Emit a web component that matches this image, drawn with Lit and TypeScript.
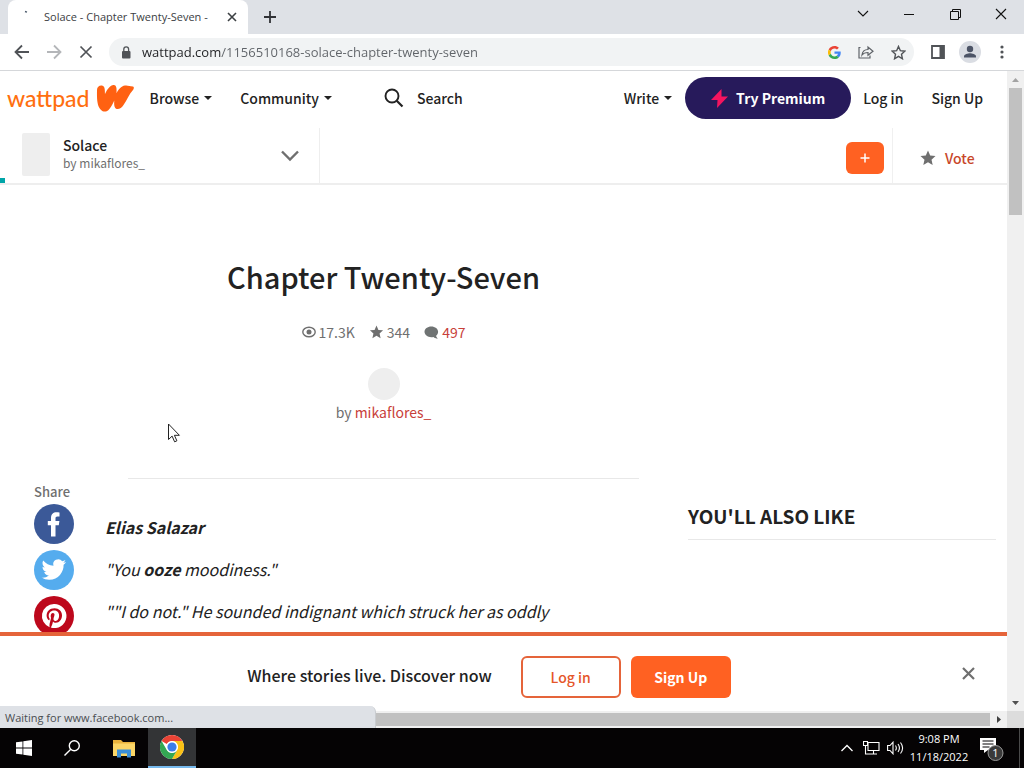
import { LitElement, html, css, svg } from "lit";
import { customElement } from "lit/decorators.js";

const caret = html`<svg class="caret" width="8" height="4" viewBox="0 0 8 4"><path d="M0 0h8L4 4z" fill="currentColor" /></svg>`;

const starPath = svg`<path d="M8 0.6l2.2 5 5.3.5-4 3.6 1.2 5.3L8 12.2 3.3 15l1.2-5.3-4-3.6 5.3-.5z" fill="currentColor" />`;

@customElement("browser-chrome")
class BrowserChrome extends LitElement {
  static styles = css`
    :host { display: block; font-family: "Open Sans", "Noto Sans", sans-serif; color: #3c4043; }
    * { box-sizing: border-box; }
    button { border: 0; background: none; padding: 0; margin: 0; color: inherit; font: inherit; display: flex; align-items: center; justify-content: center; }
    svg { display: block; }
    .strip { height: 34px; background: #dee1e6; display: flex; align-items: stretch; }
    .tab { width: 240px; margin: 0 8px; padding: 0 10px 0 14px; background: #fff; border-radius: 8px 8px 0 0; display: flex; align-items: center; }
    .spin { width: 10px; height: 16px; margin-right: 12px; }
    .title { flex: 1; min-width: 0; overflow: hidden; white-space: nowrap; font-size: 11px; line-height: 16px; }
    .new { width: 28px; }
    .space { flex: 1; }
    .win { width: 46px; height: 28px; color: #111; }
    .bar { height: 37px; display: flex; align-items: center; background: #fff; border-bottom: 1px solid #d5d7da; padding: 0 6px; color: #5f6368; }
    .nav { width: 32px; height: 28px; }
    .omni { flex: 1; margin: 0 8px 0 7px; height: 28px; border-radius: 14px; background: #f1f3f4; display: flex; align-items: center; padding: 0 0 0 12px; }
    .url { flex: 1; min-width: 0; margin-left: 11px; border: 0; outline: 0; padding: 0; font: 13px/20px "Open Sans", sans-serif; color: transparent; background: linear-gradient(90deg, #202124 79px, #5f6368 79px); background-clip: text; -webkit-background-clip: text; }
    .act { width: 32px; height: 28px; }
    .me { width: 32px; height: 28px; }
  `;
  render() {
    return html`
      <div class="strip">
        <div class="tab">
          <svg class="spin" viewBox="0 0 10 16"><path d="M3 2.5l2 .6" stroke="#4b5a6b" stroke-width="1.5" /></svg>
          <span class="title">Solace - Chapter Twenty-Seven -</span>
          <button aria-label="Close tab"><svg width="12" height="12" viewBox="0 0 12 12"><path d="M2 2l8 8M10 2l-8 8" stroke="#3c4043" stroke-width="1.6" /></svg></button>
        </div>
        <button class="new" aria-label="New tab"><svg width="14" height="14" viewBox="0 0 14 14"><path d="M7 1v12M1 7h12" stroke="#303236" stroke-width="1.8" /></svg></button>
        <span class="space"></span>
        <button class="win" aria-label="Search tabs"><svg width="12" height="8" viewBox="0 0 12 8"><path d="M1 1l5 5 5-5" fill="none" stroke="currentColor" stroke-width="1.1" /></svg></button>
        <button class="win" aria-label="Minimize"><svg width="10" height="10" viewBox="0 0 10 10"><path d="M0 5.5h10" stroke="currentColor" /></svg></button>
        <button class="win" aria-label="Restore"><svg width="11" height="11" viewBox="0 0 11 11"><path d="M.5 2.5h8v8h-8zM2.5 2.5v-2h8v8h-2" fill="none" stroke="currentColor" /></svg></button>
        <button class="win" aria-label="Close"><svg width="12" height="12" viewBox="0 0 12 12"><path d="M1 1l10 10M11 1L1 11" stroke="currentColor" stroke-width="1.1" /></svg></button>
      </div>
      <div class="bar">
        <button class="nav" aria-label="Back"><svg width="16" height="16" viewBox="0 0 16 16"><path d="M15 8H2M8 1.5L1.5 8 8 14.5" fill="none" stroke="#505357" stroke-width="1.8" /></svg></button>
        <button class="nav" aria-label="Forward"><svg width="16" height="16" viewBox="0 0 16 16"><path d="M1 8h13M8 1.5L14.500 8 8 14.500" fill="none" stroke="#b4b6b9" stroke-width="1.8" /></svg></button>
        <button class="nav" aria-label="Stop"><svg width="14" height="14" viewBox="0 0 14 14"><path d="M1.500 1.500l11 11M12.500 1.500l-11 11" stroke="#505357" stroke-width="1.7" /></svg></button>
        <div class="omni">
          <svg width="10" height="13" viewBox="0 0 10 13"><rect x="1" y="5" width="8.500" height="7.500" rx="1" fill="#505357" /><path d="M2.800 5.500V3.300a2.400 2.400 0 0 1 4.800 0v2.200" fill="none" stroke="#505357" stroke-width="1.300" /></svg>
          <input class="url" aria-label="Address" value="wattpad.com/1156510168-solace-chapter-twenty-seven" />
          <button class="act" aria-label="Google"><svg width="13" height="13" viewBox="0 0 48 48"><path fill="#ea4335" d="M24 9.500c3.500 0 6.700 1.200 9.200 3.600l6.900-6.900C35.900 2.400 30.500 0 24 0 14.600 0 6.500 5.400 2.600 13.200l8 6.200C12.400 13.700 17.700 9.500 24 9.500z" /><path fill="#4285f4" d="M47 24.500c0-1.600-.2-3.100-.4-4.500H24v9h12.900c-.6 3-2.300 5.500-4.800 7.200l7.700 6C44.400 38 47 31.800 47 24.500z" /><path fill="#fbbc05" d="M10.500 28.600a14.500 14.500 0 0 1 0-9.200l-8-6.200a24 24 0 0 0 0 21.600z" /><path fill="#34a853" d="M24 48c6.500 0 11.900-2.100 15.900-5.800l-7.700-6c-2.200 1.500-4.900 2.300-8.200 2.300-6.300 0-11.600-4.200-13.500-9.900l-8 6.200C6.500 42.600 14.600 48 24 48z" /></svg></button>
          <button class="act" aria-label="Share"><svg width="16" height="14" viewBox="0 0 16 14"><path d="M2.500 2.500H1v10.500h11V10.500M4 10c.4-3.500 2.500-5.500 6-5.500V2l5 4.200-5 4V7.500C7.500 7.500 5.500 8 4 10z" fill="none" stroke="#5f6368" stroke-width="1.200" /></svg></button>
          <button class="act" aria-label="Bookmark"><svg width="15" height="15" viewBox="0 0 16 16"><path d="M8 1.500l2 4.600 4.700.5-3.500 3.300 1 4.800L8 12.200l-4.200 2.500 1-4.800L1.300 6.600 6 6.100z" fill="none" stroke="#505357" stroke-width="1.500" /></svg></button>
        </div>
        <button class="me" aria-label="Side panel"><svg width="14" height="14" viewBox="0 0 14 14"><path d="M1 1h12v12H1z" fill="none" stroke="#505357" stroke-width="1.800" /><path d="M8.500 1H13v12H8.500z" fill="#505357" /></svg></button>
        <button class="me" aria-label="Profile"><svg width="22" height="22" viewBox="0 0 22 22"><circle cx="11" cy="11" r="11" fill="#dadde3" /><circle cx="11" cy="8" r="3.200" fill="#4c5466" /><path d="M5 16.500v-1.300c0-2 4-3 6-3s6 1 6 3v1.300z" fill="#4c5466" /></svg></button>
        <button class="me" aria-label="Menu"><svg width="4" height="14" viewBox="0 0 4 14"><circle cx="2" cy="2" r="1.600" fill="#505357" /><circle cx="2" cy="7" r="1.600" fill="#505357" /><circle cx="2" cy="12" r="1.600" fill="#505357" /></svg></button>
      </div>`;
  }
}

@customElement("story-page")
class StoryPage extends LitElement {
  static styles = css`
    :host { display: flex; flex-direction: column; min-width: 0; min-height: 0; overflow: hidden; background: #fff; font: 14px/20px "Noto Sans CJK JP", "Noto Sans", sans-serif; color: #222; }
    * { box-sizing: border-box; }
    a { color: inherit; text-decoration: none; }
    button { font: inherit; color: inherit; border: 0; background: none; padding: 0; margin: 0; white-space: nowrap; }
    svg { display: block; flex: none; }
    h1, h2, p { margin: 0; }
    .top { height: 57px; flex: none; display: flex; align-items: center; padding: 0 24px 3px 7px; font-weight: 500; }
    .logo { display: flex; align-items: center; gap: 6px; color: #ff6f0f; font: 500 23px/30px Lato, sans-serif; margin-right: 16px; }
    .menu { display: flex; align-items: center; gap: 5px; margin-right: 28px; }
    .search { flex: 1; display: flex; align-items: center; gap: 13px; margin-left: 24px; min-width: 0; }
    .field { flex: 1; min-width: 0; width: 60px; border: 0; outline: 0; padding: 0; background: none; font: inherit; }
    .field::placeholder { color: #222; opacity: 1; }
    .write { margin-right: 13px; }
    .premium { width: 166px; height: 42px; border-radius: 21px; background: #271a5b; color: #fff; font-weight: 700; display: flex; align-items: center; justify-content: center; gap: 8px; margin-right: 12px; }
    .signup { margin-left: 28px; }
    .story { height: 57px; flex: none; display: flex; align-items: stretch; border-bottom: 2px solid #eee; }
    .info { width: 320px; display: flex; align-items: center; padding: 0 20px 3px 22px; border-right: 1px solid #eee; }
    .info button { padding-top: 4px; }
    .cover { width: 28px; height: 43px; background: #eee; border-radius: 2px; margin-right: 13px; }
    .names { flex: 1; }
    .name { font-weight: 500; line-height: 18px; }
    .author { font-size: 12px; line-height: 18px; color: #6f6f6f; }
    .actions { flex: 1; display: flex; justify-content: flex-end; align-items: center; }
    .plus { width: 38px; height: 32px; border-radius: 6px; background: #ff6122; color: #fff; display: flex; align-items: center; justify-content: center; margin: 5px 8px 0 0; }
    .vote { align-self: stretch; width: 115px; border-left: 1px solid #f0f0f0; display: flex; align-items: center; gap: 9px; padding: 4px 0 0 27px; color: #c8472a; font-weight: 500; }
    .grey { color: #6f6f6f; }
    .progress { width: 5px; height: 5px; background: #00a5a8; position: absolute; left: 0; top: 178px; }
    .content { flex: 1; min-height: 0; overflow: hidden; display: grid; grid-template-columns: 1fr 308px; grid-template-rows: auto 1fr; padding-right: 11px; }
    .head { margin: 0 49px 0 128px; height: 294px; padding-top: 69px; border-bottom: 1px solid #e8e8e8; display: flex; flex-direction: column; align-items: center; }
    .head h1 { font-size: 29px; line-height: 44px; font-weight: 500; white-space: nowrap; }
    .stats { display: flex; gap: 14px; margin-top: 24px; color: #6f6f6f; }
    .stat { display: flex; align-items: center; gap: 3px; }
    .red { color: #c8403a; }
    .avatar { width: 32px; height: 32px; border-radius: 50%; background: #eee; margin-top: 26px; }
    .by { color: #6f6f6f; margin-top: 2px; }
    .body { grid-column: 1; display: flex; min-width: 0; }
    .share { width: 105px; flex: none; padding: 3px 0 0 34px; color: #6f6f6f; font-size: 13px; font-weight: 500; display: flex; flex-direction: column; gap: 6px; }
    .label { line-height: 20px; margin-bottom: -4px; }
    .text { padding: 37px 49px 0 0; font-size: 16px; line-height: 22px; font-style: italic; flex: 1; min-width: 0; white-space: nowrap; }
    .text p { margin-bottom: 20px; }
    .also { padding-top: 23px; }
    .also h2 { font-size: 19px; line-height: 28px; font-weight: 700; padding-bottom: 9px; border-bottom: 1px solid #e8e8e8; white-space: nowrap; }
    .banner { flex: none; height: 79px; border-top: 4px solid #e5643a; display: flex; align-items: center; padding: 7px 32px 0 16px; }
    .dismiss { padding-bottom: 7px; }
    .pitch { flex: 1; display: flex; align-items: center; justify-content: center; }
    .slogan { font-size: 16px; line-height: 24px; font-weight: 500; padding-bottom: 5px; margin-right: 29px; }
    .cta { width: 100px; height: 42px; border-radius: 6px; font-weight: 700; }
    .line { border: 2px solid #e5643a; color: #e5562a; font-weight: 500; margin-right: 10px; }
    .fill { background: #ff6122; color: #fff; }
  `;
  render() {
    return html`
      <header class="top">
        <a class="logo" href="#"><span>wattpad</span>
          <svg width="38" height="28" viewBox="0 0 38 28"><path d="M1 6C1 2.500 4 .8 6.600 1.700c2.700 1 2.200 5.500 2.400 8.300C11 5.500 14.500.5 18 .9c3 .4 2.600 4.500 2.500 8.300C22.500 5.500 25 2 29 1.500c3-.4 4.500.9 8 .9 1.200.5 1 2 .2 3.300C33 10 31 16 27.500 21c-2 3-5 5-7.500 3.700-2-1.300-2-5-1.700-8.200-2 4-3.500 7.500-6 9.800-2 1.800-5.500 1.800-7.500-.6C.7 22 .9 13 1 6z" fill="#ff6112" /></svg>
        </a>
        <button class="menu"><span>Browse</span>${caret}</button>
        <button class="menu"><span>Community</span>${caret}</button>
        <label class="search">
          <svg width="20" height="20" viewBox="0 0 20 20"><circle cx="8" cy="8" r="6.500" fill="none" stroke="#222" stroke-width="1.900" /><path d="M12.700 12.700l5.800 5.800" stroke="#222" stroke-width="2.200" /></svg>
          <input class="field" placeholder="Search" aria-label="Search" />
        </label>
        <button class="menu write"><span>Write</span>${caret}</button>
        <button class="premium"><svg width="17" height="19" viewBox="0 0 17 19"><path d="M10.500 0L0 11h6.500L6 19 17 7.500h-6.500z" fill="#f5145f" /></svg>Try Premium</button>
        <a href="#">Log in</a><a class="signup" href="#">Sign Up</a>
      </header>
      <div class="story">
        <div class="info">
          <div class="cover"></div>
          <div class="names"><div class="name">Solace</div><div class="author">by mikaflores_</div></div>
          <button aria-label="Table of contents"><svg width="18" height="12" viewBox="0 0 18 12"><path d="M1 1.500l8 8 8-8" fill="none" stroke="#6f6f6f" stroke-width="2.400" /></svg></button>
        </div>
        <div class="actions">
          <button class="plus" aria-label="Add to library"><svg width="10" height="10" viewBox="0 0 10 10"><path d="M5 .5v9M.5 5h9" stroke="#fff" stroke-width="1.500" /></svg></button>
          <a class="vote" href="#"><svg class="grey" width="16" height="16" viewBox="0 0 16 16">${starPath}</svg>Vote</a>
        </div>
      </div>
      <main class="content">
        <div class="head">
          <h1>Chapter Twenty-Seven</h1>
          <div class="stats">
            <span class="stat"><svg width="14" height="12" viewBox="0 0 14 12"><ellipse cx="7" cy="6" rx="6.200" ry="4.800" fill="none" stroke="#6f6f6f" stroke-width="1.400" /><circle cx="7" cy="6" r="2.500" fill="#6f6f6f" /></svg>17.3K</span>
            <span class="stat"><svg width="15" height="14" viewBox="0 0 16 16">${starPath}</svg>344</span>
            <span class="stat"><svg width="15" height="13" viewBox="0 0 15 13"><path d="M7.300.5c3.800 0 6.800 2.300 6.800 5.300 0 1.700-.8 3-2 4 .1 1.200.8 2 1.900 2.700-2 .1-3.500-.5-4.500-1.500-.7.100-1.500.2-2.200.2C3.500 11.200.5 8.800.5 5.800S3.500.5 7.300.5z" fill="#6f7373" /></svg><a class="red" href="#">497</a></span>
          </div>
          <div class="avatar"></div>
          <div class="by">by <a class="red" href="#">mikaflores_</a></div>
        </div>
        <div class="body">
          <div class="share">
            <span class="label">Share</span>
            <a href="#" aria-label="Facebook"><svg width="40" height="40" viewBox="0 0 40 40"><circle cx="20" cy="20" r="20" fill="#3b5998" /><path d="M17 32.500V21.300h-3.200V17H17v-3c0-4 2.200-5.800 5.600-5.800 1.200 0 2.400.1 2.900.2v4.200h-2c-1.700 0-2 .9-2 2V17h3.900l-.6 4.300h-3.300v11.200z" fill="#fff" /></svg></a>
            <a href="#" aria-label="Twitter"><svg width="40" height="40" viewBox="0 0 40 40"><circle cx="20" cy="20" r="20" fill="#55acee" /><path transform="translate(7.500 7.500)" d="M24.600 4.500c-.9.400-1.900.7-2.900.8 1-.6 1.800-1.600 2.200-2.800-1 .6-2.100 1-3.200 1.200a5 5 0 0 0-8.700 4.600C7.800 8.100 4.200 6.100 1.700 3.100a5 5 0 0 0 1.600 6.800c-.8 0-1.600-.3-2.300-.6v.1c0 2.400 1.700 4.500 4 5-.7.200-1.500.2-2.300.1a5 5 0 0 0 4.700 3.500A10.200 10.200 0 0 1 0 20.100a14.400 14.400 0 0 0 7.700 2.200c9.300 0 14.700-7.900 14.400-15 1-.7 1.900-1.700 2.500-2.800z" fill="#fff" /></svg></a>
            <a href="#" aria-label="Pinterest"><svg width="40" height="40" viewBox="0 0 40 40"><circle cx="20" cy="20" r="20" fill="#bd081c" /><path transform="translate(8 8)" d="M12 0a12 12 0 0 0-4.400 23.200c-.1-1-.2-2.400 0-3.500l1.500-6s-.4-.7-.4-1.800c0-1.700 1-3 2.200-3 1.100 0 1.600.8 1.600 1.700 0 1.100-.7 2.600-1 4.100-.3 1.200.6 2.200 1.800 2.200 2.100 0 3.800-2.200 3.800-5.500 0-2.900-2.100-4.900-5-4.900-3.400 0-5.400 2.600-5.400 5.200 0 1 .4 2.100.9 2.700.1.100.1.200.1.300l-.3 1.400c-.1.200-.2.300-.4.200-1.500-.7-2.400-2.900-2.400-4.700 0-3.800 2.800-7.300 8-7.300 4.200 0 7.400 3 7.400 7 0 4.100-2.600 7.500-6.200 7.500-1.200 0-2.400-.6-2.800-1.400l-.7 2.900c-.3 1-1 2.300-1.500 3.100A12 12 0 1 0 12 0z" fill="#fff" /></svg></a>
          </div>
          <div class="text">
            <p><b>Elias Salazar</b></p>
            <p>"You <b>ooze</b> moodiness."</p>
            <p>""I do not." He sounded indignant which struck her as oddly</p>
          </div>
        </div>
        <aside class="also"><h2>YOU'LL ALSO LIKE</h2></aside>
      </main>
      <section class="banner">
        <div class="pitch">
          <span class="slogan">Where stories live. Discover now</span>
          <button class="cta line">Log in</button>
          <button class="cta fill">Sign Up</button>
        </div>
        <button class="dismiss" aria-label="Dismiss"><svg width="13" height="13" viewBox="0 0 13 13"><path d="M1 1l11 11M12 1L1 12" stroke="#6f6f6f" stroke-width="2.200" /></svg></button>
      </section>
      <div class="progress"></div>`;
  }
}

@customElement("task-bar")
class TaskBar extends LitElement {
  static styles = css`
    :host { display: flex; height: 40px; flex: none; background: #050304; color: #fff; font: 12px/18px "Open Sans", sans-serif; align-items: stretch; }
    * { box-sizing: border-box; }
    button { border: 0; padding: 0; margin: 0; background: none; color: inherit; font: inherit; display: flex; align-items: center; justify-content: center; }
    svg { display: block; }
    .app { width: 48px; }
    .wide { margin-left: 4px; }
    .active { background: #333436; border-bottom: 2px solid #76b9ed; }
    .space { flex: 1; }
    .tray { width: 24px; }
    .clock { width: 64px; font-size: 11px; flex-direction: column; }
    .note { width: 49px; padding-right: 7px; margin-right: 4px; border-right: 1px solid #4a4a4a; }
  `;
  render() {
    return html`
      <button class="app" aria-label="Start"><svg width="16" height="16" viewBox="0 0 16 16"><path d="M0 2.300L6.500 1.400v6.200H0zM7.300 1.300L16 0v7.600H7.300zM0 8.400h6.500v6.200L0 13.700zM7.300 8.400H16V16l-8.700-1.300z" fill="#fff" /></svg></button>
      <button class="app" aria-label="Search"><svg width="16" height="16" viewBox="0 0 16 16"><circle cx="10.300" cy="5.700" r="5" fill="none" stroke="#fff" stroke-width="1.400" /><path d="M6.800 9.200L.5 15.500" stroke="#fff" stroke-width="1.400" /></svg></button>
      <button class="app wide" aria-label="File Explorer"><svg width="22" height="19" viewBox="0 0 22 19"><path d="M0 1h8l2 2h12v14H0z" fill="#e9b33d" /><path d="M0 4.500h22V17H0z" fill="#fbd667" /><path d="M4 18.500v-8h14v8h-4v-4H8v4z" fill="#3b8fd6" /></svg></button>
      <button class="app active" aria-label="Chrome"><svg width="24" height="24" viewBox="0 0 24 24"><circle cx="12" cy="12" r="12" fill="#fff" /><path d="M12 0a12 12 0 0 1 10.400 6H12a6 6 0 0 0-5.200 3L1.600 6A12 12 0 0 1 12 0z" fill="#ea4335" /><path d="M22.400 6A12 12 0 0 1 12 24l5.200-9A6 6 0 0 0 12 6z" fill="#fbc116" /><path d="M12 24A12 12 0 0 1 1.600 6l5.200 9A6 6 0 0 0 17.200 15z" fill="#34a853" /><circle cx="12" cy="12" r="5.800" fill="#fff" /><circle cx="12" cy="12" r="4.600" fill="#3c7de8" /></svg></button>
      <span class="space"></span>
      <button class="tray" aria-label="Show hidden icons"><svg width="12" height="8" viewBox="0 0 12 8"><path d="M.5 7L6 1.500 11.500 7" fill="none" stroke="#fff" stroke-width="1.300" /></svg></button>
      <button class="tray" aria-label="Network"><svg width="17" height="14" viewBox="0 0 17 14"><path d="M5 1.500h11v8H5zM10.500 9.500v3.500M7 13h7M2.500 5v8H7M.5.500h4v4h-4z" fill="#050304" stroke="#fff" stroke-width="1.100" /></svg></button>
      <button class="tray" aria-label="Volume"><svg width="17" height="14" viewBox="0 0 17 14"><path d="M.6 4.500H3l3-3.300v11.600l-3-3.300H.6zM8.500 4.500c1 1.500 1 3.500 0 5M11 3c1.800 2.500 1.800 5.500 0 8M13.500 1.500c2.600 3.400 2.600 7.600 0 11" fill="none" stroke="#fff" stroke-width="1.100" /></svg></button>
      <button class="clock"><span>9:08 PM</span><span>11/18/2022</span></button>
      <button class="note" aria-label="Notifications, 1 new"><svg width="26" height="26" viewBox="0 0 26 26"><path d="M1 3h16v12H9l-4 3v-3H1z" fill="#fff" /><path d="M3.500 6h11M3.500 9h11M3.500 12h7" stroke="#050304" stroke-width="1.200" /><circle cx="16.500" cy="18" r="7.500" fill="#3a3a3a" stroke="#9a9a9a" /><text x="16.500" y="22" text-anchor="middle" font-family="Open Sans" font-size="11" fill="#fff">1</text></svg></button>`;
  }
}

@customElement("app-root")
class AppRoot extends LitElement {
  static styles = css`
    :host { display: flex; flex-direction: column; height: 100vh; position: relative; overflow: hidden; }
    * { box-sizing: border-box; }
    .view { flex: 1; min-height: 0; display: grid; grid-template-columns: minmax(0, 1fr) 17px; grid-template-rows: minmax(0, 1fr) 17px; }
    .track { background: #f0f0f0; display: flex; align-items: center; justify-content: space-between; }
    .vertical { flex-direction: column; }
    .step { width: 17px; height: 17px; display: flex; align-items: center; justify-content: center; }
    .vthumb { width: 13px; height: 127px; background: #c1c1c1; margin-bottom: auto; }
    .hthumb { flex: 1; height: 13px; background: #c1c1c1; }
    .corner { background: #dcdcdc; }
    .status { position: absolute; left: 0; bottom: 40px; width: 376px; height: 22px; padding: 0 5px; background: #dee1e6; border: 1px solid #c9ccd0; border-width: 0 1px 0 0; border-radius: 0 6px 0 0; font: 11px/23px "Open Sans", sans-serif; color: #4a4d51; }
    .pointer { position: absolute; left: 168px; top: 423px; }
  `;
  render() {
    return html`
      <browser-chrome></browser-chrome>
      <div class="view">
        <story-page></story-page>
        <div class="track vertical">
          <span class="step"><svg width="7" height="4" viewBox="0 0 7 4"><path d="M0 4h7L3.500 0z" fill="#a3a3a3" /></svg></span>
          <span class="vthumb"></span>
          <span class="step"><svg width="7" height="4" viewBox="0 0 7 4"><path d="M0 0h7L3.500 4z" fill="#505050" /></svg></span>
        </div>
        <div class="track">
          <span class="step"></span><span class="hthumb"></span>
          <span class="step"><svg width="4" height="7" viewBox="0 0 4 7"><path d="M0 0v7l4-3.500z" fill="#404040" /></svg></span>
        </div>
        <div class="corner"></div>
      </div>
      <task-bar></task-bar>
      <div class="status">Waiting for www.facebook.com...</div>
      <svg class="pointer" width="13" height="20" viewBox="0 0 13 20"><path d="M.5 1v15.500l3.600-3.400 2.500 5.700 2.300-1-2.500-5.500h5z" fill="#fff" stroke="#222" /></svg>`;
  }
}
